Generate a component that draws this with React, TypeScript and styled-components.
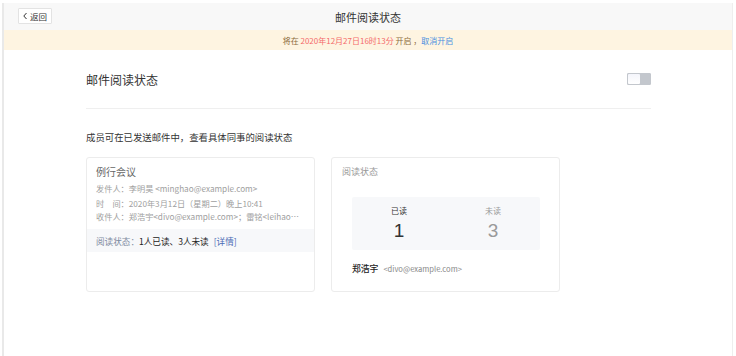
import * as React from 'react'
import styled, { createGlobalStyle } from 'styled-components'

const GlobalStyle = createGlobalStyle`
  html, body {
    margin: 0;
    padding: 0;
    background: #fff;
    font-family: "Noto Sans CJK SC", "Noto Sans", sans-serif;
  }
`

const Page = styled.div`
  padding: 3px 0 0 2px;
  height: 353px;
  width: 732px;
`

const Frame = styled.div`
  height: 100%;
  width: 728px;
  border-left: 2px solid #e9e9e9;
  border-right: 1px solid #eeeeee;
  display: flex;
  flex-direction: column;
`

const Header = styled.div`
  position: relative;
  height: 27px;
  background: #f8f8f8;
  display: flex;
  align-items: center;
  justify-content: center;
`

const BackButton = styled.button`
  position: absolute;
  left: 14px;
  top: 5px;
  height: 16px;
  width: 34px;
  padding: 0 0 0 3px;
  box-sizing: border-box;
  background: #fff;
  border: 1px solid #e3e3e3;
  border-radius: 1px;
  display: flex;
  align-items: center;
  gap: 1px;
  font-family: inherit;
  font-size: 8.5px;
  color: #333;
  cursor: pointer;
`

const HeaderTitle = styled.div`
  font-size: 11px;
  color: #333;
`

const Notice = styled.div`
  height: 20px;
  background: #fef4e1;
  display: flex;
  align-items: center;
  justify-content: center;
  font-size: 8px;
  color: #8c6b3c;
  white-space: pre;
`

const Red = styled.span`
  color: #f46b6b;
`

const Link = styled.a`
  color: #4a8fe0;
  cursor: pointer;
`

const Main = styled.div`
  padding: 0 81px 0 82px;
`

const SectionHead = styled.div`
  height: 58px;
  display: flex;
  align-items: center;
  justify-content: space-between;
  border-bottom: 1px solid #efefef;
`

const SectionTitle = styled.div`
  font-size: 12px;
  color: #333;
`

const Toggle = styled.div`
  width: 24px;
  height: 12px;
  box-sizing: border-box;
  border: 1px solid #c3c7cd;
  background: #c3c7cd;
  border-radius: 1px;
  display: flex;
`

const Thumb = styled.div`
  width: 12px;
  height: 10px;
  background: linear-gradient(#f4f5fb, #ffffff);
  border-radius: 1px;
`

const Description = styled.div`
  margin-top: 22px;
  font-size: 9.4px;
  color: #333;
  line-height: 12px;
`

const Cards = styled.div`
  margin-top: 14px;
  display: flex;
  gap: 16px;
`

const Card = styled.div`
  width: 229px;
  height: 135px;
  box-sizing: border-box;
  border: 1px solid #ececec;
  border-radius: 3px;
  background: #fff;
  display: flex;
  flex-direction: column;
`

const CardTitle = styled.div<{ small?: boolean }>`
  padding: 6px ${p => (p.small ? '10px' : '9px')} 0;
  font-size: ${p => (p.small ? '9px' : '10px')};
  color: ${p => (p.small ? '#999' : '#666')};
  line-height: 15px;
`

const MailRows = styled.div`
  padding: 3px 9px 0;
  display: flex;
  flex-direction: column;
`

const MailRow = styled.div<{ gap: number }>`
  margin-top: ${p => p.gap}px;
  font-size: 8.2px;
  line-height: 12px;
  color: #a0a0a0;
  white-space: nowrap;
  overflow: hidden;
  text-overflow: ellipsis;
`

const StatusBand = styled.div`
  margin-top: 7px;
  height: 23px;
  padding: 0 9px;
  background: #f7f8fa;
  display: flex;
  align-items: center;
  font-size: 8.6px;
  white-space: pre;
`

const StatusLabel = styled.span`
  color: #7e8aa0;
`

const StatusValue = styled.span`
  color: #222;
`

const Detail = styled.a`
  margin-left: 5px;
  color: #4a6bb4;
  cursor: pointer;
`

const StatsBox = styled.div`
  margin: 18px 0 0 20px;
  width: 188px;
  height: 53px;
  background: #f7f8fa;
  border-radius: 2px;
  display: grid;
  grid-template-columns: 1fr 1fr;
`

const Stat = styled.div<{ muted?: boolean }>`
  display: flex;
  flex-direction: column;
  align-items: center;
  padding-top: 8px;
  color: ${p => (p.muted ? '#9a9a9a' : '#333')};
`

const StatLabel = styled.div`
  font-size: 8px;
  line-height: 12px;
`

const StatNumber = styled.div`
  font-family: "Liberation Sans", Arial, sans-serif;
  font-size: 19px;
  line-height: 22px;
  margin-top: 3px;
`

const Reader = styled.div`
  margin: 12px 0 0 20px;
  display: flex;
  align-items: center;
  gap: 5px;
  white-space: nowrap;
`

const ReaderName = styled.span`
  font-size: 8.8px;
  color: #222;
  font-weight: 500;
`

const ReaderMail = styled.span`
  font-size: 7.6px;
  color: #888;
`

function Chevron(): JSX.Element {
  return (
    <svg width="7" height="8" viewBox="0 0 7 8">
      <path d="M4.5 1 L1.8 4 L4.5 7" fill="none" stroke="#333" strokeWidth="1" />
    </svg>
  )
}

export default function App(): JSX.Element {
  return (
    <>
      <GlobalStyle />
      <Page>
        <Frame>
          <Header>
            <BackButton>
              <Chevron />
              返回
            </BackButton>
            <HeaderTitle>邮件阅读状态</HeaderTitle>
          </Header>
          <Notice>
            {'将在 '}
            <Red>2020年12月27日16时13分</Red>
            {' 开启 ，'}
            <Link>取消开启</Link>
          </Notice>
          <Main>
            <SectionHead>
              <SectionTitle>邮件阅读状态</SectionTitle>
              <Toggle>
                <Thumb />
              </Toggle>
            </SectionHead>
            <Description>成员可在已发送邮件中，查看具体同事的阅读状态</Description>
            <Cards>
              <Card>
                <CardTitle>例行会议</CardTitle>
                <MailRows>
                  <MailRow gap={0}>发件人：李明昊 &lt;minghao@example.com&gt;</MailRow>
                  <MailRow gap={3}>时　间：2020年3月12日（星期二）晚上10:41</MailRow>
                  <MailRow gap={1}>
                    收件人：郑浩宇&lt;divo@example.com&gt;；雷铭&lt;leihao@example.com&gt;
                  </MailRow>
                </MailRows>
                <StatusBand>
                  <StatusLabel>阅读状态：</StatusLabel>
                  <StatusValue>1人已读、3人未读</StatusValue>
                  <Detail>[详情]</Detail>
                </StatusBand>
              </Card>
              <Card>
                <CardTitle small>阅读状态</CardTitle>
                <StatsBox>
                  <Stat>
                    <StatLabel>已读</StatLabel>
                    <StatNumber>1</StatNumber>
                  </Stat>
                  <Stat muted>
                    <StatLabel>未读</StatLabel>
                    <StatNumber>3</StatNumber>
                  </Stat>
                </StatsBox>
                <Reader>
                  <ReaderName>郑浩宇</ReaderName>
                  <ReaderMail>&lt;divo@example.com&gt;</ReaderMail>
                </Reader>
              </Card>
            </Cards>
          </Main>
        </Frame>
      </Page>
    </>
  )
}
